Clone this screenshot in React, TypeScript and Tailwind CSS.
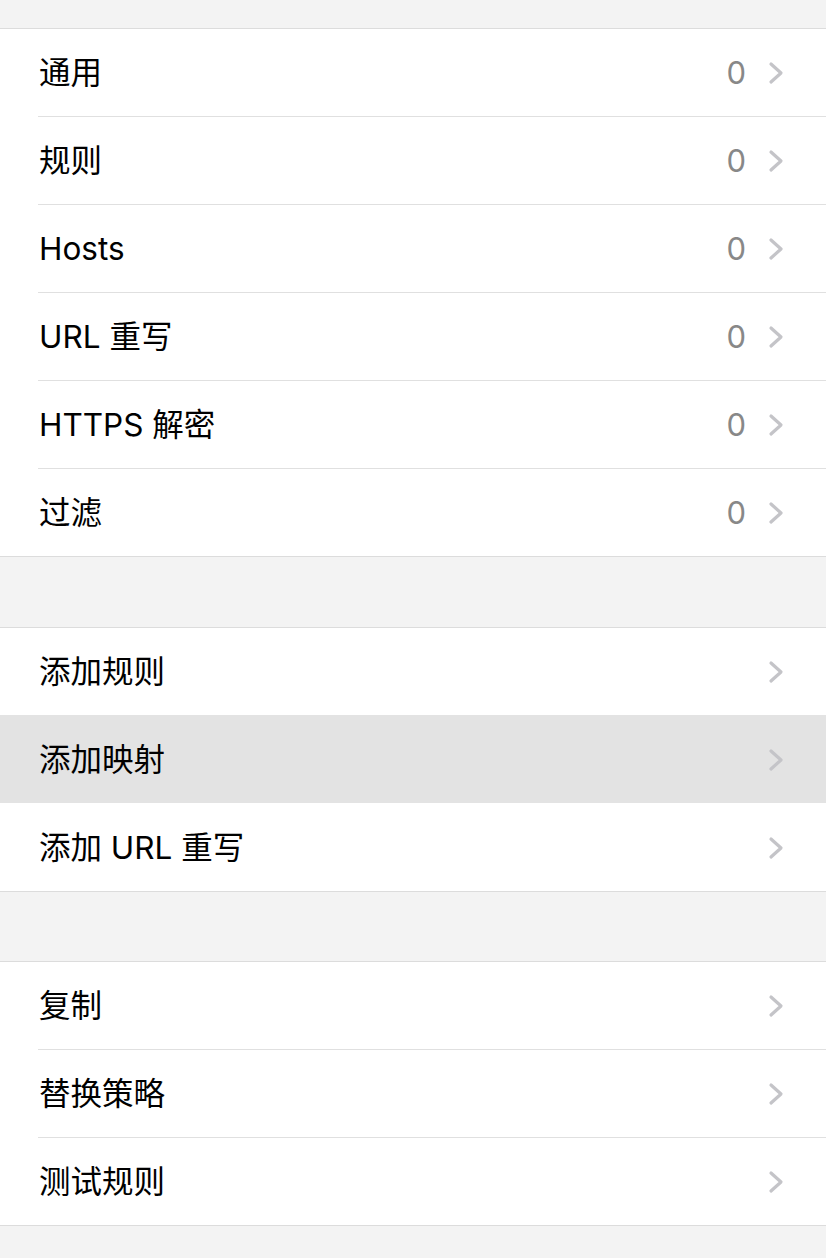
import React from "react";

type Row = { label: string; count?: number; active?: boolean };

const sections: Row[][] = [
  [
    { label: "通用", count: 0 },
    { label: "规则", count: 0 },
    { label: "Hosts", count: 0 },
    { label: "URL 重写", count: 0 },
    { label: "HTTPS 解密", count: 0 },
    { label: "过滤", count: 0 },
  ],
  [
    { label: "添加规则" },
    { label: "添加映射", active: true },
    { label: "添加 URL 重写" },
  ],
  [{ label: "复制" }, { label: "替换策略" }, { label: "测试规则" }],
];

const Chevron = () => (
  <svg width="16" height="24" viewBox="0 0 16 24" fill="none">
    <polyline
      points="3,3 13,12 3,21"
      stroke="#c4c4c8"
      strokeWidth="3.2"
      strokeLinecap="round"
      strokeLinejoin="round"
    />
  </svg>
);

const App = () => {
  return (
    <div
      className="min-h-[1258px] w-full bg-[#f3f3f3] pt-[28px]"
      style={{ fontFamily: 'Inter, "Noto Sans CJK SC", sans-serif' }}
    >
      {sections.map((rows, s) => (
        <div key={s} className={s === 0 ? "" : s === 1 ? "mt-[70px]" : "mt-[69px]"}>
          <div className="border-y border-[#dcdcdc] bg-white">
            {rows.map((row, i) => (
              <div key={row.label} className={row.active ? "bg-[#e3e3e3]" : ""}>
                {i > 0 && !row.active && !rows[i - 1].active && (
                  <div className="ml-[38px] h-px bg-[#e0e0e0]" />
                )}
                {i > 0 && (row.active || rows[i - 1].active) && (
                  <div className={row.active ? "h-px bg-[#e3e3e3]" : "h-px bg-white"} />
                )}
                <div className="flex h-[87px] items-center pl-[39px] pr-[42px]">
                  <span className="flex-1 text-[31.5px] text-black">{row.label}</span>
                  {row.count !== undefined && (
                    <span className="mr-[22px] mt-[2px] text-[31px] text-[#888888]">
                      {row.count}
                    </span>
                  )}
                  <Chevron />
                </div>
              </div>
            ))}
          </div>
        </div>
      ))}
    </div>
  );
};

export default App;
